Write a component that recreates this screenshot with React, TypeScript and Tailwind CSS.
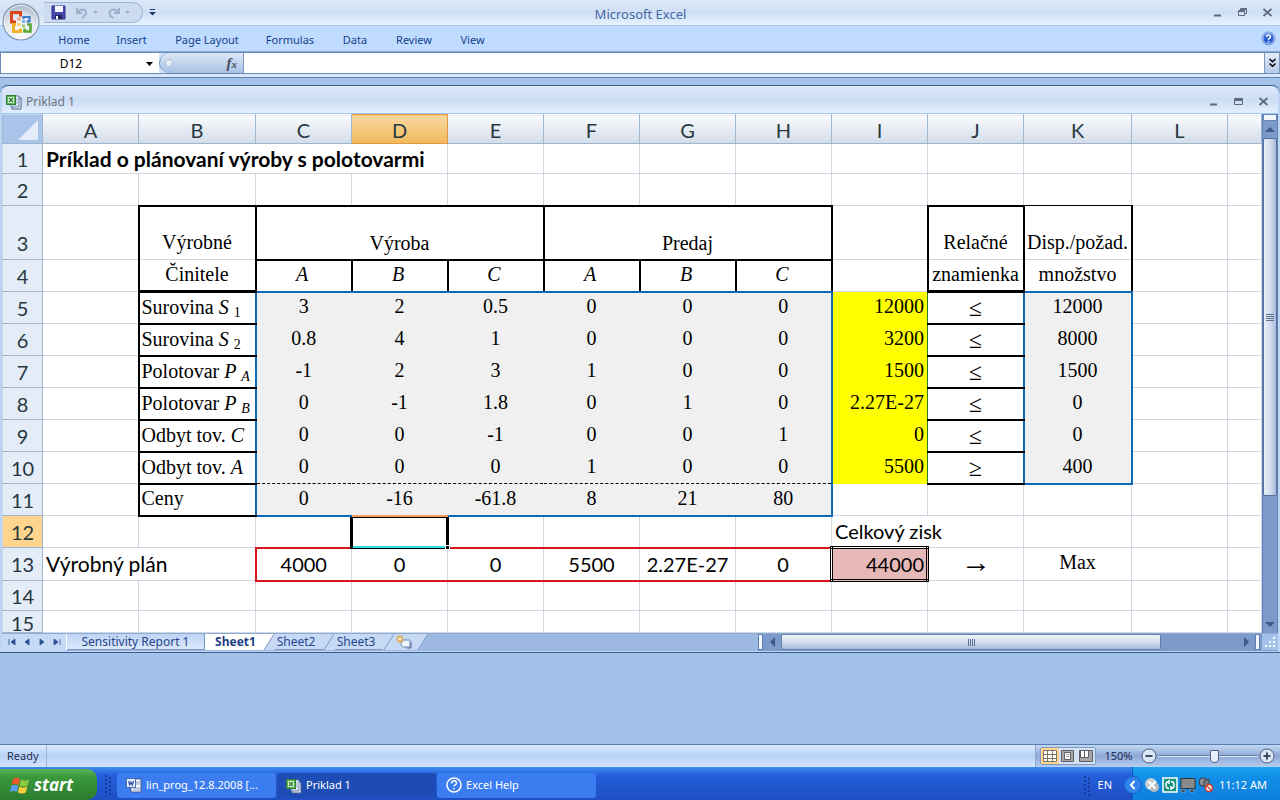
import { ReactNode } from 'react';

const UI_FONT = "font-['Noto_Sans',sans-serif]";
const SERIF = "font-['Liberation_Serif',serif] text-[20px]";

const ribbonTabs = [
  { label: 'Home', width: 'w-[58px]' },
  { label: 'Insert', width: 'w-[57px]' },
  { label: 'Page Layout', width: 'w-[94px]' },
  { label: 'Formulas', width: 'w-[72px]' },
  { label: 'Data', width: 'w-[58px]' },
  { label: 'Review', width: 'w-[60px]' },
  { label: 'View', width: 'w-[57px]' },
];

const columns = [
  { name: 'A', width: 'w-[96px]' },
  { name: 'B', width: 'w-[117px]' },
  { name: 'C', width: 'w-[96px]' },
  { name: 'D', width: 'w-[96px]' },
  { name: 'E', width: 'w-[96px]' },
  { name: 'F', width: 'w-[96px]' },
  { name: 'G', width: 'w-[96px]' },
  { name: 'H', width: 'w-[96px]' },
  { name: 'I', width: 'w-[96px]' },
  { name: 'J', width: 'w-[96px]' },
  { name: 'K', width: 'w-[108px]' },
  { name: 'L', width: 'w-[96px]' },
  { name: '', width: '' },
];

type Constraint = {
  row: number;
  label: ReactNode;
  values: string[];
  total: string;
  relation: string;
  limit: string;
};

const sub = (text: string) => <sub className="text-[14px] leading-none">{text}</sub>;

const constraints: Constraint[] = [
  { row: 5, label: <>Surovina <i>S</i> {sub('1')}</>, values: ['3', '2', '0.5', '0', '0', '0'], total: '12000', relation: '≤', limit: '12000' },
  { row: 6, label: <>Surovina <i>S</i> {sub('2')}</>, values: ['0.8', '4', '1', '0', '0', '0'], total: '3200', relation: '≤', limit: '8000' },
  { row: 7, label: <>Polotovar <i>P {sub('A')}</i></>, values: ['-1', '2', '3', '1', '0', '0'], total: '1500', relation: '≤', limit: '1500' },
  { row: 8, label: <>Polotovar <i>P {sub('B')}</i></>, values: ['0', '-1', '1.8', '0', '1', '0'], total: '2.27E-27', relation: '≤', limit: '0' },
  { row: 9, label: <>Odbyt tov. <i>C</i></>, values: ['0', '0', '-1', '0', '0', '1'], total: '0', relation: '≤', limit: '0' },
  { row: 10, label: <>Odbyt tov. <i>A</i></>, values: ['0', '0', '0', '1', '0', '0'], total: '5500', relation: '≥', limit: '400' },
];

const prices = ['0', '-16', '-61.8', '8', '21', '80'];
const plan = ['4000', '0', '0', '5500', '2.27E-27', '0'];

const Cell = ({
  className = '',
  colSpan,
  children,
}: {
  className?: string;
  colSpan?: number;
  children?: ReactNode;
}) => (
  <td colSpan={colSpan} className={`border border-[#d0d7e5] p-0 whitespace-nowrap ${className}`}>
    {children}
  </td>
);

const Blanks = ({ count }: { count: number }) => (
  <>
    {Array.from({ length: count }, (_, i) => (
      <Cell key={i} />
    ))}
  </>
);

const RowHead = ({ n, className = '' }: { n: number; className?: string }) => (
  <th
    scope="row"
    className={`border border-[#9eb6ce] border-l-[#c5d8f0] p-0 font-normal text-[#26383f] ${
      n === 12 ? 'bg-[#ffd58d]' : 'bg-[#e4ecf7]'
    } ${className}`}
  >
    {n}
  </th>
);

// Edge classes for the grey C:H block
const blockEdges = (i: number) =>
  `${i === 0 ? 'border-l-2 border-l-[#0d6ab8]' : ''} ${i === 5 ? 'border-r-2 border-r-[#0d6ab8]' : ''}`;

const Sheet = () => (
  <table className="w-full table-fixed border-collapse font-[Lato,sans-serif] text-[20px] leading-6 text-black">
    <colgroup>
      <col className="w-[40px]" />
      {columns.map((c, i) => (
        <col key={i} className={c.width} />
      ))}
    </colgroup>
    <thead>
      <tr className="h-[29px]">
        <th className="border border-[#9eb6ce] border-t-[#c5d8f0] bg-[#a9c4e9] p-0" aria-label="Select all">
          <svg viewBox="0 0 38 27" className="ml-auto block h-[27px] w-[38px]">
            <path d="M14 24 L34 4 L34 24 Z" fill="#e3ecf8" />
          </svg>
        </th>
        {columns.map((c, i) => (
          <th
            key={i}
            scope="col"
            className={`border p-0 pt-px font-normal text-[#26383f] ${
              c.name === 'D'
                ? 'border-[#e09a48] bg-linear-to-b from-[#f9d99f] to-[#f1b95a]'
                : 'border-[#9eb6ce] border-t-white bg-linear-to-b from-[#f9fbfd] to-[#d3dce9]'
            }`}
          >
            {c.name}
          </th>
        ))}
      </tr>
    </thead>
    <tbody>
      <tr className="h-[30px]">
        <RowHead n={1} />
        <Cell colSpan={4} className="pl-[3px] text-[21px] font-bold">
          Príklad o plánovaní výroby s polotovarmi
        </Cell>
        <Blanks count={9} />
      </tr>
      <tr className="h-[32px]">
        <RowHead n={2} />
        <Blanks count={10} />
        <Cell className="border-b-black" />
        <Blanks count={2} />
      </tr>
      <tr className="h-[54px]">
        <RowHead n={3} className="pb-1 align-bottom" />
        <Cell />
        <Cell className={`${SERIF} border-x-2 border-t-2 border-x-black border-t-black pb-[5px] text-center align-bottom`}>
          Výrobné
        </Cell>
        <Cell colSpan={3} className={`${SERIF} border-2 border-black pb-1 text-center align-bottom`}>
          Výroba
        </Cell>
        <Cell colSpan={3} className={`${SERIF} border-2 border-black pb-1 text-center align-bottom`}>
          Predaj
        </Cell>
        <Cell />
        <Cell className={`${SERIF} border-x-2 border-t-2 border-x-black border-t-black pb-[5px] text-center align-bottom`}>
          Relačné
        </Cell>
        <Cell className={`${SERIF} border-r-2 border-t-black border-r-black pb-[5px] text-center align-bottom`}>
          Disp./požad.
        </Cell>
        <Blanks count={2} />
      </tr>
      <tr className="h-[32px]">
        <RowHead n={4} />
        <Cell />
        <Cell className={`${SERIF} border-x-2 border-b-3 border-x-black border-b-black pb-[3px] text-center`}>Činitele</Cell>
        {['A', 'B', 'C', 'A', 'B', 'C'].map((letter, i) => (
          <Cell
            key={i}
            className={`${SERIF} border-x-2 border-b-2 border-x-black border-b-[#0d6ab8] pr-[3px] pb-[3px] text-center italic`}
          >
            {letter}
          </Cell>
        ))}
        <Cell />
        <Cell className={`${SERIF} border-x-2 border-b-3 border-x-black border-b-black pb-[3px] text-center`}>znamienka</Cell>
        <Cell className={`${SERIF} border-r-2 border-b-2 border-r-black border-b-[#0d6ab8] pb-[3px] text-center`}>
          množstvo
        </Cell>
        <Blanks count={2} />
      </tr>
      {constraints.map((c, index) => {
        const last = index === constraints.length - 1;
        return (
          <tr key={c.row} className="h-[32px]">
            <RowHead n={c.row} />
            <Cell />
            <Cell className={`${SERIF} border-b-2 border-l-2 border-b-black border-l-black pb-[2px] pl-[2px]`}>{c.label}</Cell>
            {c.values.map((v, i) => (
              <Cell
                key={i}
                className={`${SERIF} border-[#f0f0f0] bg-[#f0f0f0] pb-[3px] text-center ${blockEdges(i)} ${
                  last ? 'border-b-black [border-bottom-style:dashed]' : ''
                }`}
              >
                {v}
              </Cell>
            ))}
            <Cell className={`${SERIF} border-[#ffff00] border-r-[#2e7a1e] bg-[#ffff00] pr-[3px] pb-[3px] text-right`}>
              {c.total}
            </Cell>
            <Cell className="border-b-2 border-b-black text-center font-['Liberation_Serif',serif] text-[24px]">
              {c.relation}
            </Cell>
            <Cell
              className={`${SERIF} border-x-2 border-y-[#f0f0f0] border-x-[#0d6ab8] bg-[#f0f0f0] pb-[3px] text-center ${
                last ? 'border-b-2 border-b-[#0d6ab8]' : ''
              }`}
            >
              {c.limit}
            </Cell>
            <Blanks count={2} />
          </tr>
        );
      })}
      <tr className="h-[32px]">
        <RowHead n={11} />
        <Cell />
        <Cell className={`${SERIF} border-b-2 border-l-2 border-b-black border-l-black pb-[3px] pl-[2px]`}>Ceny</Cell>
        {prices.map((v, i) => (
          <Cell
            key={i}
            className={`${SERIF} border-x-[#f0f0f0] border-t-0 border-b-2 bg-[#f0f0f0] pb-[3px] text-center ${blockEdges(i)} ${
              i === 1 ? 'border-b-[#f39a5c]' : 'border-b-[#0d6ab8]'
            }`}
          >
            {v}
          </Cell>
        ))}
        <Blanks count={5} />
      </tr>
      <tr className="h-[32px]">
        <RowHead n={12} />
        <Blanks count={3} />
        <Cell className="relative">
          <div className="absolute -inset-x-[2px] top-0 -bottom-[2px] border-x-3 border-t border-b border-black">
            <div className="absolute inset-x-0 bottom-0 h-[2px] bg-[#2fe0ea]" />
            <div className="absolute -right-[4px] -bottom-[2px] size-[5px] border border-white bg-black" />
          </div>
        </Cell>
        <Blanks count={4} />
        <Cell colSpan={2} className="pl-[3px]">
          Celkový zisk
        </Cell>
        <Blanks count={3} />
      </tr>
      <tr className="h-[33px]">
        <RowHead n={13} />
        <Cell colSpan={2} className="pl-[3px] text-[21px]">
          Výrobný plán
        </Cell>
        {plan.map((v, i) => (
          <Cell
            key={i}
            className={`border-y-2 border-y-[#d8141c] text-center ${i === 0 ? 'border-l-2 border-l-[#d8141c]' : ''}`}
          >
            {v}
          </Cell>
        ))}
        <Cell className="border-3 border-double border-black bg-[#e6b8b7] pr-[2px] text-right">44000</Cell>
        <Cell className="pb-[4px] text-center font-['Liberation_Serif',serif] text-[30px]">→</Cell>
        <Cell className={`${SERIF} pb-[5px] text-center`}>Max</Cell>
        <Blanks count={2} />
      </tr>
      <tr className="h-[30px]">
        <RowHead n={14} />
        <Blanks count={13} />
      </tr>
      <tr className="h-[22px]">
        <RowHead n={15} className="pt-[3px] leading-[18px]" />
        <Blanks count={13} />
      </tr>
    </tbody>
  </table>
);

const ExcelIcon = () => (
  <svg viewBox="0 0 16 16" className="size-4 shrink-0">
    <path d="M6 4h9v11H6z" fill="#fff" stroke="#3d5687" />
    <path d="M5 2h8v11H5z" fill="#f4f8ff" stroke="#5b78a6" />
    <path d="M10 5h2M10 7h2M10 9h2M6 12h6" stroke="#8fa9cc" />
    <rect x=".5" y="1.500" width="9" height="9" fill="#5db254" stroke="#2d7d32" />
    <path d="M2 3h6v6H2z" fill="#e4f5df" />
    <path d="M3 4l4 4M7 4L3 8" stroke="#2d7d32" strokeWidth="1.500" />
  </svg>
);

const WordIcon = () => (
  <svg viewBox="0 0 16 16" className="size-4 shrink-0">
    <path d="M5 2h10v13H5z" fill="#fff" stroke="#40588c" />
    <path d="M10 5h4M10 7h4M7 11h7M7 13h7" stroke="#7b94c4" />
    <rect x=".5" y="1.500" width="9" height="9" fill="#e9f0ff" stroke="#4a6cb0" />
    <path d="M2.500 4l1.300 4L5 5l1.300 3 1.300-4" fill="none" stroke="#2a53a8" strokeWidth="1.200" />
  </svg>
);

const OfficeLogo = () => (
  <svg viewBox="0 0 40 40" className="size-10">
    <defs>
      <radialGradient id="orb" cx=".5" cy=".75" r=".7">
        <stop offset="0" stopColor="#fff" />
        <stop offset=".6" stopColor="#e3e8ef" />
        <stop offset="1" stopColor="#a9b7c9" />
      </radialGradient>
    </defs>
    <circle cx="20" cy="20" r="18" fill="url(#orb)" stroke="#8698b3" strokeWidth="1.200" />
    <circle cx="20" cy="20" r="16.500" fill="none" stroke="#fff" strokeOpacity=".8" />
    <g fill="none">
      <path d="M15 20h-4.500v-9.500h9v4" stroke="#d8481c" strokeWidth="3" />
      <path d="M22.500 17v-2h6v4.500h-3" stroke="#3a78c8" strokeWidth="2.200" />
      <path d="M15 22.500h-2.500v7h7v-3" stroke="#f3b32a" strokeWidth="3" />
      <path d="M26 22.500h3.500v7h-6v-3" stroke="#58a83a" strokeWidth="2.600" />
    </g>
    <path d="M16.500 15.500h3v3h-3z" fill="#f0a070" />
    <path d="M21 18h3v3h-3z" fill="#7fb0ea" />
    <path d="M16.500 21h3v3h-3z" fill="#f9d25c" />
    <path d="M21 22.500h3v3h-3z" fill="#93cb74" />
  </svg>
);

const WindowButtons = ({ restored = false }: { restored?: boolean }) => (
  <div className="flex items-center gap-[9px] text-[#5f6b7d]">
    <button aria-label="Minimize" className="size-4">
      <svg viewBox="0 0 16 16" fill="none" stroke="currentColor">
        <path d="M4 10.500h7" strokeWidth="2" />
      </svg>
    </button>
    <button aria-label="Restore" className="size-4">
      <svg viewBox="0 0 16 16" fill="none" stroke="currentColor">
        {restored ? (
          <path d="M3.500 4.500h8v6h-8zM3 5.500h9M3 6.500h9" />
        ) : (
          <path d="M3.500 5.500h6v5h-6zM3 6.500h7M5.500 5V3.500h6v5H10M5 4.500h7" />
        )}
      </svg>
    </button>
    <button aria-label="Close" className="size-4">
      <svg viewBox="0 0 16 16" fill="none" stroke="currentColor">
        <path d="M3.500 4l8 7M11.500 4l-8 7" strokeWidth="1.800" />
      </svg>
    </button>
  </div>
);

const TitleBar = () => (
  <header className="relative flex h-[26px] items-center border-b border-[#a9c9ee] bg-linear-to-b from-[#dce8f8] via-[#cfdff5] to-[#e6f2fd] pr-[4px] pl-[44px]">
    <button aria-label="Office Button" className="absolute top-[2px] left-[1px] z-10 size-10 rounded-full">
      <OfficeLogo />
    </button>
    <div className="flex h-[21px] w-[99px] items-center gap-[9px] rounded-r-full border border-l-0 border-[#9db6d8] bg-[#cddcf1] pl-[7px]">
      <button aria-label="Save">
        <svg viewBox="0 0 15 15" className="size-[15px]">
          <path d="M1 1h13v13H1z" fill="#4646ae" stroke="#30308c" />
          <path d="M4 1h8v6H4z" fill="#f4f6ff" />
          <path d="M4 10h7v4H4z" fill="#22224e" />
          <path d="M5 11h2v3H5z" fill="#fff" />
        </svg>
      </button>
      <button aria-label="Undo" className="flex items-center gap-[4px] text-[#9dafca]">
        <svg viewBox="0 0 14 14" className="size-[14px]" fill="none" stroke="currentColor" strokeWidth="2">
          <path d="M2 2v5h5M2.500 7c3-5 9-4 8.500 0-.2 2-2 3-4 5" />
        </svg>
        <svg viewBox="0 0 5 3" className="h-[3px] w-[5px]" fill="currentColor"><path d="M0 0h5L2.500 3z" /></svg>
      </button>
      <button aria-label="Redo" className="flex items-center gap-[4px] text-[#9dafca]">
        <svg viewBox="0 0 14 14" className="size-[14px]" fill="none" stroke="currentColor" strokeWidth="2">
          <path d="M12 2v5H7M11.500 7c-3-5-9-4-9 0 0 2 1 4 4 5" />
        </svg>
        <svg viewBox="0 0 5 3" className="h-[3px] w-[5px]" fill="currentColor"><path d="M0 0h5L2.500 3z" /></svg>
      </button>
    </div>
    <button aria-label="Customize Quick Access Toolbar" className="ml-[6px]">
      <svg viewBox="0 0 7 7" className="size-[7px]" fill="#1f3a6e"><path d="M1 0h5v1H1zM0 3h7L3.500 6.500z" /></svg>
    </button>
    <h1 className="flex-1 pt-[3px] pr-[85px] text-center text-[13px] leading-5 text-[#4668a6]">Microsoft Excel</h1>
    <WindowButtons />
  </header>
);

const Ribbon = () => (
  <nav className="flex h-[26px] items-center justify-between border-b border-[#8ba8d0] bg-[#bfdbff] pr-[4px] pl-[45px]">
    <div className="flex pt-[3px]">
      {ribbonTabs.map((t) => (
        <button key={t.label} className={`${t.width} text-center text-[11px] leading-5 whitespace-nowrap text-[#15428b]`}>
          {t.label}
        </button>
      ))}
    </div>
    <button aria-label="Help">
      <svg viewBox="0 0 15 15" className="size-[15px]">
        <circle cx="7.500" cy="7.500" r="6.500" fill="#2a62d4" stroke="#7b9fd8" />
        <circle cx="7.500" cy="7.500" r="5.500" fill="none" stroke="#dfeaff" strokeWidth=".8" />
        <path d="M5.500 6c0-3 4.200-2.500 4 0-.2 1.200-2 1.200-2 2.800M7.500 10v1.500" fill="none" stroke="#fff" strokeWidth="1.500" />
      </svg>
    </button>
  </nav>
);

const FormulaBar = () => (
  <div className="border-b border-[#5f7fae] bg-[#d9e7fb] pb-[3px]">
    <div className="flex h-[22px] items-stretch border-y border-[#6a8bb8] bg-[#d6e4f8]">
      <input
        aria-label="Name Box"
        defaultValue="D12"
        className="w-[141px] border-l border-[#6a8bb8] bg-white pt-[2px] text-center text-[12px] outline-none"
      />
      <button aria-label="Named cells" className="flex w-[18px] items-center bg-white pt-[2px] pl-[5px]">
        <svg viewBox="0 0 7 4" className="h-[4px] w-[7px]"><path d="M0 0h7L3.500 4z" /></svg>
      </button>
      <div className="flex w-[85px] items-center justify-between rounded-l-full border-r border-l border-[#7b98c4] bg-linear-to-b from-[#dde8f8] to-[#a9c1e4] pr-[6px] pl-[5px]">
        <span className="size-[8px] rounded-full border border-[#aebdd4] bg-[#e9eef6]" />
        <button aria-label="Insert Function" className="font-['Liberation_Serif',serif] text-[15px] leading-4 font-bold text-[#475063] italic">
          f<span className="text-[11px]">x</span>
        </button>
      </div>
      <input aria-label="Formula" className="min-w-0 flex-1 bg-white outline-none" />
      <button aria-label="Expand Formula Bar" className="flex w-[16px] items-center justify-center border-x border-[#7b98c4] bg-linear-to-b from-[#e4edfa] to-[#b4c9e8]">
        <svg viewBox="0 0 9 10" className="h-[10px] w-[9px]" fill="none" stroke="#000" strokeWidth="1.500">
          <path d="M1.500 1l3 2.800 3-2.800M1.500 5.500l3 2.800 3-2.800" />
        </svg>
      </button>
    </div>
  </div>
);

const VerticalScroll = () => (
  <div className="flex w-[16px] flex-col border-x border-[#5f80b5] bg-[#7c9bcb]">
    <div className="h-[7px] border border-[#6484b8] bg-[#f2f7ff]" />
    <button aria-label="Scroll up" className="flex h-[17px] items-center justify-center">
      <svg viewBox="0 0 10 5" className="h-[5px] w-[10px]" fill="#3f5a8a"><path d="M0 5h10L5 0z" /></svg>
    </button>
    <div className="flex h-[358px] items-center justify-center rounded-[2px] border border-[#566f9c] bg-linear-to-r from-[#e8eef7] via-[#d3dded] to-[#a9bbd8]">
      <div className="flex flex-col gap-px">
        {[0, 1, 2, 3].map((n) => (
          <span key={n} className="h-px w-[8px] bg-[#5f7191]" />
        ))}
      </div>
    </div>
    <div className="flex-1" />
    <button aria-label="Scroll down" className="flex h-[17px] items-center justify-center">
      <svg viewBox="0 0 10 5" className="h-[5px] w-[10px]" fill="#3f5a8a"><path d="M0 0h10L5 5z" /></svg>
    </button>
  </div>
);

const tabNav = [
  { label: 'First sheet', d: 'M2 1v6M8 1L4 4l4 3z' },
  { label: 'Previous sheet', d: 'M7 1L3 4l4 3z' },
  { label: 'Next sheet', d: 'M3 1l4 3-4 3z' },
  { label: 'Last sheet', d: 'M8 1v6M2 1l4 3-4 3z' },
];

const SlantEdge = ({ active = false }: { active?: boolean }) => (
  <svg viewBox="0 0 12 16" className="h-[16px] w-[12px] shrink-0">
    {active && <path d="M0 0h11L1 16H0z" fill="#fff" />}
    <path d="M1 16L11 0" stroke="#7d98c4" fill="none" />
  </svg>
);

const SheetTabs = () => (
  <div className="flex h-[18px] items-stretch border-t border-[#8faad2] bg-[#9db9e2] text-[12px] leading-4 text-[#27468a]">
    <div className="flex w-[64px] items-center justify-around bg-[#c6daf6] px-[2px] pb-[2px]">
      {tabNav.map((b) => (
        <button key={b.label} aria-label={b.label}>
          <svg viewBox="0 0 10 8" className="h-[8px] w-[10px]" fill="#2c4f94" stroke="#2c4f94"><path d={b.d} strokeWidth=".8" /></svg>
        </button>
      ))}
    </div>
    <div className="flex h-[16px] items-stretch border-l border-white bg-[#c6daf6]">
      <button className="w-[138px] border-r border-b border-[#7d98c4] bg-linear-to-b from-[#bdd4f5] to-[#dbe8fb] whitespace-nowrap">
        Sensitivity Report 1
      </button>
      <button className="w-[58px] bg-white pl-[3px] text-center font-bold whitespace-nowrap text-[#1c3f86]">Sheet1</button>
      <SlantEdge active />
      <button className="w-[48px] border-b border-[#7d98c4] pr-[6px] whitespace-nowrap">Sheet2</button>
      <SlantEdge />
      <button className="w-[48px] border-b border-[#7d98c4] pr-[6px] whitespace-nowrap">Sheet3</button>
      <SlantEdge />
      <button aria-label="Insert Worksheet" className="w-[22px]">
        <svg viewBox="0 0 20 14" className="h-[14px] w-[20px]">
          <path d="M6 5h9v7H8l-2-2z" fill="#eef4fd" stroke="#6d84ac" />
          <path d="M12 13h4V7" fill="none" stroke="#4f6797" />
          <path d="M5 0v8M1 4h8M2 1l6 6M8 1L2 7" stroke="#e0a23a" strokeWidth="1.200" />
          <circle cx="5" cy="4" r="1.600" fill="#fff3c2" />
        </svg>
      </button>
    </div>
    <svg viewBox="0 0 12 16" className="h-[16px] w-[12px]">
      <path d="M0 0h11L1 16H0z" fill="#c6daf6" />
      <path d="M1 16L11 0" stroke="#7d98c4" />
    </svg>
    <div className="flex-1" />
    <div className="flex w-[520px] items-stretch bg-[#7c9bcb] pb-px">
      <div className="w-[5px] border border-[#5f80b5] bg-[#f2f7ff]" />
      <button aria-label="Scroll left" className="flex w-[18px] items-center justify-center">
        <svg viewBox="0 0 5 10" className="h-[10px] w-[5px]" fill="#3f5a8a"><path d="M5 0v10L0 5z" /></svg>
      </button>
      <div className="flex w-[380px] items-center justify-center gap-px rounded-[2px] border border-[#6680ad] bg-linear-to-b from-[#f0f4fa] via-[#d3dded] to-[#a9bbd8]">
        {[0, 1, 2, 3].map((n) => (
          <span key={n} className="h-[7px] w-px bg-[#5f7191]" />
        ))}
      </div>
      <div className="flex-1" />
      <button aria-label="Scroll right" className="flex w-[17px] items-center justify-center">
        <svg viewBox="0 0 5 10" className="h-[10px] w-[5px]" fill="#3f5a8a"><path d="M0 0v10l5-5z" /></svg>
      </button>
      <div className="w-[5px] border border-[#5f80b5] bg-[#f2f7ff]" />
      <svg viewBox="0 0 16 16" className="ml-[2px] size-4 bg-[#a3c2ea]" fill="#fff">
        <path d="M11 3h2v2h-2zM7 7h2v2H7zM11 7h2v2h-2zM3 11h2v2H3zM7 11h2v2H7zM11 11h2v2h-2z" />
      </svg>
    </div>
  </div>
);

const Workbook = () => (
  <section className="rounded-t-lg border-t border-b border-[#3c5a8c] bg-[#bdd4f2] px-[2px] pb-px">
    <div className="flex h-[28px] items-center justify-between rounded-t-lg border-b border-[#9cc6ee] bg-linear-to-b from-[#dfeafa] via-[#cbdcf4] to-[#e2effd] pt-[4px] pr-[6px] pl-[4px]">
      <div className="flex items-center gap-[4px] text-[12px] leading-5 text-[#6c7480]">
        <ExcelIcon />
        Priklad 1
      </div>
      <WindowButtons restored />
    </div>
    <div className="flex bg-white">
      <div className="h-[519px] min-w-0 flex-1 overflow-hidden">
        <Sheet />
      </div>
      <VerticalScroll />
    </div>
    <SheetTabs />
  </section>
);

const ZoomButton = ({ label, d }: { label: string; d: string }) => (
  <button aria-label={label}>
    <svg viewBox="0 0 16 16" className="size-4" fill="none">
      <circle cx="8" cy="8" r="7" fill="#dce7f6" stroke="#52647f" />
      <path d={d} stroke="#3d4c64" strokeWidth="2" />
    </svg>
  </button>
);

const NormalViewIcon = () => (
  <svg viewBox="0 0 14 12" className="h-[12px] w-[14px]" fill="#fff" stroke="#7d7460">
    <path d="M.5 .5h13v11H.5zM.5 4.500h13M.5 8.500h13M4.500 .5v11M9.500 .5v11" />
  </svg>
);

const LayoutViewIcon = () => (
  <svg viewBox="0 0 14 12" className="h-[12px] w-[14px]" stroke="#5d5f63">
    <path d="M.5 .5h12v11H.5z" fill="#a7a8aa" />
    <path d="M3.500 2.500h6v7h-6z" fill="#fff" />
    <path d="M5 4.500h3M5 6.500h3" stroke="#9a9b9e" />
  </svg>
);

const BreakViewIcon = () => (
  <svg viewBox="0 0 14 12" className="h-[12px] w-[14px]" stroke="#5d5f63">
    <path d="M.5 .5h13v11H.5z" fill="#a7a8aa" />
    <path d="M1.500 .5h4v7h-4zM5.500 .5h4v7h-4z" fill="#fff" />
  </svg>
);

const views = [
  { label: 'Normal', Icon: NormalViewIcon },
  { label: 'Page Layout', Icon: LayoutViewIcon },
  { label: 'Page Break Preview', Icon: BreakViewIcon },
];

const StatusBar = () => (
  <footer className="flex h-[23px] items-stretch border-t border-[#567db0] bg-linear-to-b from-[#dbe8fb] via-[#b7d1f5] to-[#d6e5fb] text-[11px] text-[#1b2f55]">
    <div className="flex w-[47px] items-center border-r border-[#9ab3da] pl-[7px]">Ready</div>
    <div className="flex-1" />
    <div className="flex items-center border-l border-[#8ba7d3] bg-linear-to-b from-[#c4d8f3] via-[#8fa9d6] to-[#b6cdf0] pr-[5px] pl-[4px]">
      <div className="flex h-[18px] rounded-[2px] border border-[#7f9cc8]">
        {views.map(({ label, Icon }, i) => (
          <button
            key={label}
            aria-label={label}
            className={`flex w-[18px] items-center justify-center ${i === 0 ? 'bg-[#ffd58d]' : 'bg-[#d4e1f4]'}`}
          >
            <Icon />
          </button>
        ))}
      </div>
      <button className="w-[45px] text-center">150%</button>
      <ZoomButton label="Zoom out" d="M4.500 8h7" />
      <input
        type="range"
        aria-label="Zoom"
        min={0}
        max={100}
        defaultValue={57}
        className="mx-[1px] h-[14px] w-[100px] appearance-none bg-[linear-gradient(#5f7ba8_50%,#dfe9f8_50%)] bg-[length:100%_2px] bg-center bg-no-repeat [&::-webkit-slider-thumb]:h-[13px] [&::-webkit-slider-thumb]:w-[9px] [&::-webkit-slider-thumb]:appearance-none [&::-webkit-slider-thumb]:rounded-t-[1px] [&::-webkit-slider-thumb]:rounded-b-[5px] [&::-webkit-slider-thumb]:border [&::-webkit-slider-thumb]:border-[#52647f] [&::-webkit-slider-thumb]:bg-[#e8effa]"
      />
      <ZoomButton label="Zoom in" d="M4.500 8h7M8 4.500v7" />
    </div>
  </footer>
);

const Grip = () => (
  <div className="grid grid-cols-2 gap-[2px]">
    {Array.from({ length: 10 }, (_, i) => (
      <span key={i} className={`size-[2px] bg-[#173c9c] ${i % 2 ? 'translate-y-[2px]' : ''}`} />
    ))}
  </div>
);

const taskButton =
  'flex h-[25px] w-[159px] items-center gap-[4px] rounded-[3px] px-[9px] text-[11px] text-white whitespace-nowrap';

const Taskbar = () => (
  <div className="flex h-[33px] items-stretch bg-linear-to-b from-[#3f8cf0] via-[#245edb] via-25% to-[#1e4fc4]">
    <button className="mt-[2px] flex w-[97px] items-center gap-[4px] rounded-r-[10px] bg-linear-to-b from-[#5cb35a] via-[#3a9a3c] via-25% to-[#2b7c2d] pl-[10px] font-['Open_Sans',sans-serif] text-[17px] font-bold text-white italic">
      <svg viewBox="0 0 20 18" className="h-[18px] w-[20px]">
        <path d="M3 3c3-2 5-1 7 0L8.500 9c-2-1-4-1.500-7 0z" fill="#e8592b" />
        <path d="M11 3.500c3 1.500 5 1.500 8 0l-1.500 6c-3 1.500-5 1-8 0z" fill="#8ccc3c" />
        <path d="M1.300 10c3-1.500 5-1 7 0l-1.500 6c-2-1-4-1.500-7 0z" fill="#5c9cf0" />
        <path d="M9.300 10.500c3 1.500 5 1.500 8 0l-1.500 6c-3 1.500-5 1-8 0z" fill="#f8cb38" />
      </svg>
      start
    </button>
    <div className="flex items-center pl-[8px]">
      <Grip />
    </div>
    <div className="flex flex-1 items-center gap-px pt-[3px] pl-[6px]">
      <button className={`${taskButton} bg-[#3b7cf0]`}>
        <WordIcon />
        lin_prog_12.8.2008 [...
      </button>
      <button className={`${taskButton} bg-[#1d4cb4] pt-px`}>
        <ExcelIcon />
        Priklad 1
      </button>
      <button className={`${taskButton} bg-[#3b7cf0]`}>
        <svg viewBox="0 0 16 16" className="size-4" fill="none" stroke="#fff">
          <circle cx="8" cy="8" r="7" strokeWidth="1.500" />
          <path d="M5.500 6.500c0-4 5.200-3.200 5 0-.2 1.500-2.500 1.500-2.500 3M8 11v1.500" strokeWidth="1.500" />
        </svg>
        Excel Help
      </button>
    </div>
    <div className="flex items-center gap-[8px] pt-[3px] pr-[20px] text-[11px] text-white">
      <Grip />
      <button>EN</button>
    </div>
    <div className="relative flex items-center gap-[2px] border-l border-[#0b5cc0] bg-linear-to-b from-[#1ca6f4] via-[#1190e8] via-25% to-[#0f80dc] pt-[3px] pr-[13px] pl-[11px] text-[11px] text-white">
      <button aria-label="Show hidden icons" className="absolute top-[9px] -left-[9px]">
        <svg viewBox="0 0 18 18" className="size-[18px]" fill="none">
          <circle cx="9" cy="9" r="8.500" fill="#2f84ec" stroke="#1c5fc8" />
          <path d="M10.500 5L7 9l3.500 4" stroke="#fff" strokeWidth="2" />
        </svg>
      </button>
      <svg viewBox="0 0 16 16" className="size-4">
        <circle cx="7" cy="7" r="6" fill="#c9d0d4" />
        <circle cx="10" cy="10" r="5" fill="#b4bdc3" />
        <path d="M4.500 4.500l7 7M11.500 4.500l-7 7" stroke="#fff" strokeWidth="2" />
      </svg>
      <svg viewBox="0 0 16 16" className="size-4" fill="none">
        <path d="M1 1h14v14H1z" fill="#16937c" stroke="#fff" strokeWidth="1.500" />
        <path d="M7 4.500c-4 0-4 7 0 7M9 4.500c4 0 4 7 0 7M7 3v4M9 9v4" stroke="#fff" strokeWidth="1.500" />
      </svg>
      <svg viewBox="0 0 16 16" className="size-4">
        <path d="M1 1.500h14v10H1z" fill="#8a8a8a" stroke="#333" />
        <path d="M1 13h4v2H1zM10 13h4v2h-4z" fill="#222" stroke="#b8c8d8" strokeWidth=".5" />
      </svg>
      <svg viewBox="0 0 16 16" className="size-4">
        <circle cx="5" cy="5" r="4" fill="#8d8d92" stroke="#3c3c44" />
        <path d="M6 4l5-2v10L6 9z" fill="#77777e" stroke="#44444c" />
        <circle cx="11" cy="11" r="3.500" fill="#fff" stroke="#d03a2a" strokeWidth="1.600" />
        <path d="M8.800 8.800l4.400 4.400" stroke="#d03a2a" strokeWidth="1.400" />
      </svg>
      <time className="pl-[3px]">11:12 AM</time>
    </div>
  </div>
);

export default function App() {
  return (
    <div className={`${UI_FONT} flex min-h-screen flex-col overflow-hidden bg-[#a3c2ea]`}>
      <TitleBar />
      <Ribbon />
      <FormulaBar />
      <main className="flex-1 pt-[7px]">
        <Workbook />
      </main>
      <StatusBar />
      <Taskbar />
    </div>
  );
}
